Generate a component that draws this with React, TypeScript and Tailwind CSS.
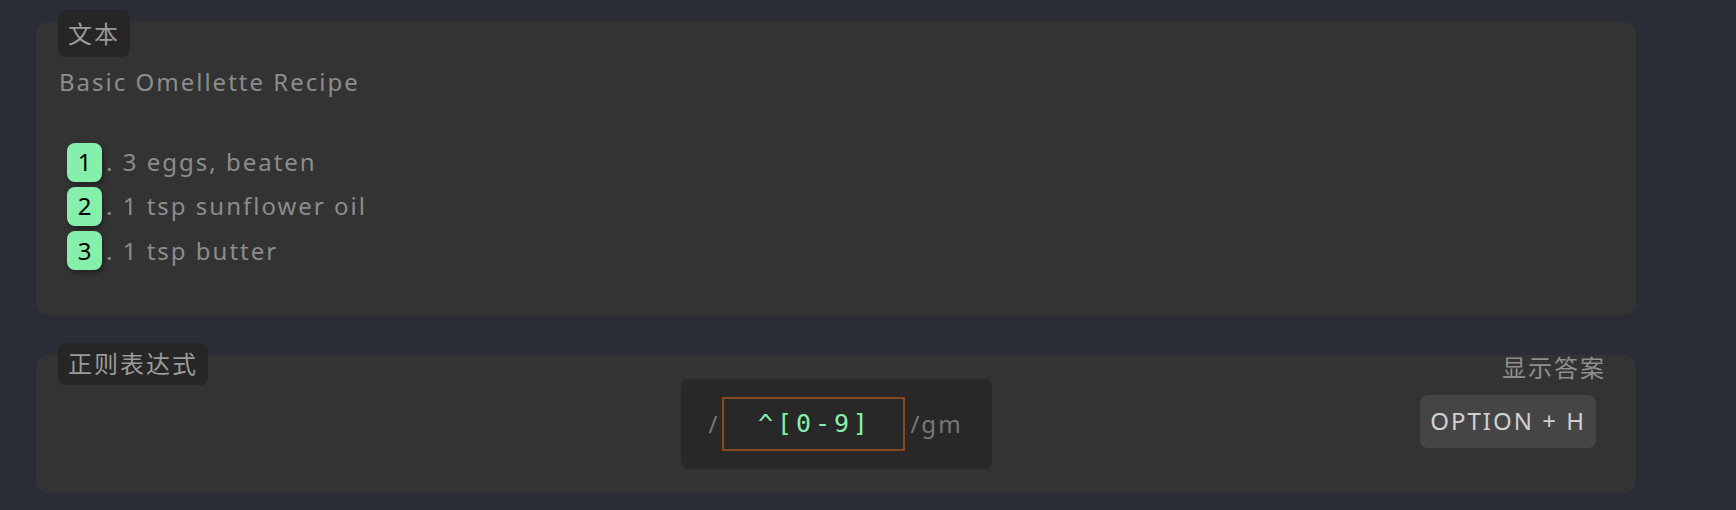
import React from "react";

const ingredients = ["3 eggs, beaten", "1 tsp sunflower oil", "1 tsp butter"];

const sans = "font-['Noto_Sans','Noto_Sans_CJK_SC',sans-serif]";

const Label: React.FC<{ text: string; height: string }> = ({ text, height }) => (
  <div
    className={`absolute left-[22px] top-[-12px] flex items-center rounded-lg bg-[#262626] px-[10px] text-[24px] tracking-[2px] text-[#9a9a9a] ${height}`}
  >
    {text}
  </div>
);

const App: React.FC = () => {
  return (
    <div className={`min-h-screen bg-[#2a2d36] pl-[36px] pt-[22px] ${sans}`}>
      <div className="relative w-[1600px] rounded-xl bg-[#333333] px-[23px] pb-[42px] pt-[40px]">
        <Label text="文本" height="h-[47px]" />
        <p className="text-[24px] leading-[40px] tracking-[2px] text-[#8c8c8c]">
          Basic Omellette Recipe
        </p>

        <div className="mt-[38px] flex flex-col">
          {ingredients.map((item, i) => (
            <div key={item} className="flex h-[44.3px] items-center">
              <span className="ml-[8px] flex h-[39px] w-[35px] items-center justify-center rounded-lg bg-[#86efac] text-[24px] text-black shadow-[2px_3px_5px_rgba(0,0,0,0.35)]">
                {i + 1}
              </span>
              <span className="ml-[4px] text-[24px] tracking-[2px] text-[#8c8c8c]">
                . {item}
              </span>
            </div>
          ))}
        </div>
      </div>

      <div className="relative mt-[40px] grid h-[138px] w-[1600px] grid-cols-[1fr_auto_1fr] items-center rounded-xl bg-[#333333]">
        <Label text="正则表达式" height="h-[42px]" />
        <div />

        <div className="flex h-[90px] w-[311px] items-center rounded-lg bg-[#282828] pl-[28px]">
          <span className="text-[24px] tracking-[2px] text-[#777777]">/</span>
          <div className="ml-[3px] flex h-[54px] w-[183px] items-center justify-center border-2 border-[#8b4a1e] pl-[2px] font-['DejaVu_Sans_Mono',monospace] text-[25px] tracking-[3.9px] text-[#86efac]">
            ^[0-9]
          </div>
          <span className="ml-[5px] text-[24px] tracking-[2px] text-[#777777]">/gm</span>
        </div>

        <div className="flex h-full flex-col items-end pr-[30px]">
          <span className="-mt-[1px] text-[24px] leading-[28px] tracking-[2px] text-[#8f8f8f]">
            显示答案
          </span>
          <button className="mr-[10px] mt-[13px] flex h-[53px] items-center rounded-lg bg-[#454545] px-[10px] text-[24px] tracking-[2px] text-[#d0d0d0]">
            OPTION + H
          </button>
        </div>
      </div>
    </div>
  );
};

export default App;
